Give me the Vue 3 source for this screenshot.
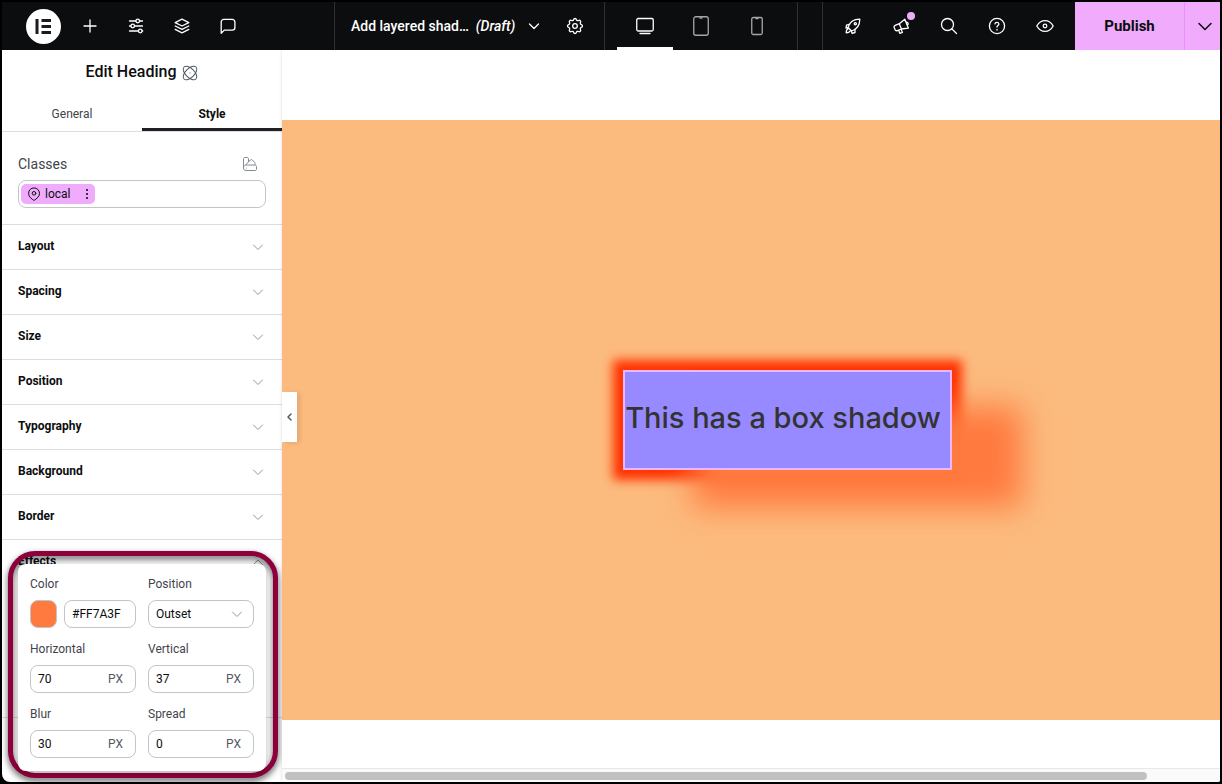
<script setup>
import { ref } from 'vue'

const sections = ['Layout', 'Spacing', 'Size', 'Position', 'Typography', 'Background', 'Border']
const color = ref('#FF7A3F')
const position = ref('Outset')
const sizes = ref([
  { id: 'horizontal', label: 'Horizontal', value: '70' },
  { id: 'vertical', label: 'Vertical', value: '37' },
  { id: 'blur', label: 'Blur', value: '30' },
  { id: 'spread', label: 'Spread', value: '0' },
])
const classInput = ref('')
</script>

<template>
  <div class="app">
    <header class="topbar">
      <div class="tools">
        <button class="logo" aria-label="Elementor menu">
          <svg width="35" height="35" viewBox="0 0 35 35"><circle cx="17.500" cy="17.500" r="17.500" fill="#fff" /><path d="M9.500 10h3v15h-3zM15.500 10h9.500v3h-9.500zM15.500 16h9.500v3h-9.500zM15.500 22h9.500v3h-9.500z" fill="#1b1c20" /></svg>
        </button>
        <button class="tool" aria-label="Add element">
          <svg class="ic" viewBox="0 0 20 20"><path d="M10 4v12M4 10h12" /></svg>
        </button>
        <button class="tool" aria-label="Site settings">
          <svg class="ic" viewBox="0 0 20 20"><path d="M3.500 5h6.300M13.600 5h2.900M3.500 10h1.300M8.600 10h7.900M3.500 15h8.900M16.200 15h.5" /><circle cx="11.700" cy="5" r="1.800" /><circle cx="6.700" cy="10" r="1.800" /><circle cx="14.300" cy="15" r="1.800" /></svg>
        </button>
        <button class="tool" aria-label="Structure">
          <svg class="ic" viewBox="0 0 20 20"><path d="M10 3.200 3.200 6.600 10 10l6.800-3.400zM3.200 10l6.800 3.400 6.800-3.400M3.200 13.400 10 16.800l6.800-3.400" /></svg>
        </button>
        <button class="tool" aria-label="Notes">
          <svg class="ic" viewBox="0 0 20 20"><path d="M3.200 17.200V6a2.600 2.600 0 0 1 2.600-2.600h8.500A2.600 2.600 0 0 1 16.900 6v5.500a2.600 2.600 0 0 1-2.600 2.600H6.300z" /></svg>
        </button>
      </div>
      <div class="document">
        <button class="doc-title"><span>Add layered shad…</span><em>(Draft)</em>
          <svg class="ic small" viewBox="0 0 16 16"><path d="m3.500 6 4.500 4.500L12.500 6" /></svg>
        </button>
        <button class="tool gear" aria-label="Page settings">
          <svg class="ic" viewBox="0 0 20 20"><path d="M8.600 3.600c.35-1.450 2.450-1.450 2.800 0a1.440 1.440 0 0 0 2.150.9c1.270-.78 2.730.68 1.950 1.950a1.440 1.440 0 0 0 .9 2.150c1.450.35 1.450 2.450 0 2.800a1.440 1.440 0 0 0-.9 2.150c.78 1.270-.68 2.730-1.950 1.950a1.440 1.440 0 0 0-2.150.9c-.35 1.450-2.450 1.450-2.800 0a1.440 1.440 0 0 0-2.150-.9c-1.270.78-2.730-.68-1.950-1.950a1.440 1.440 0 0 0-.9-2.150c-1.450-.35-1.450-2.450 0-2.800a1.440 1.440 0 0 0 .9-2.150c-.78-1.270.68-2.730 1.950-1.950a1.440 1.440 0 0 0 2.150-.9z" /><circle cx="10" cy="10" r="2.300" /></svg>
        </button>
      </div>
      <div class="devices">
        <button class="device active" aria-label="Desktop">
          <svg class="ic" viewBox="0 0 20 20"><rect x="1.750" y="2.500" width="16.500" height="12.500" rx="1.500" /><path d="M5 17.500h10" /></svg>
        </button>
        <button class="device" aria-label="Tablet">
          <svg class="ic" viewBox="0 0 20 20"><rect x="2.750" y="0.750" width="14.500" height="18.500" rx="2" /><path d="M9 2h2" /></svg>
        </button>
        <button class="device" aria-label="Mobile">
          <svg class="ic" viewBox="0 0 20 20"><rect x="4.750" y="1.500" width="10.500" height="17" rx="1.500" /><path d="M9 2.500h2" /></svg>
        </button>
      </div>
      <div class="utilities">
        <button class="util" aria-label="Checklist">
          <svg class="ic" viewBox="0 0 20 20"><path d="M6.800 13.200 5 11.500c1.200-4.500 4.500-8.300 11.800-8.300C16.800 9 14.200 13.300 8.500 15zM7 8 3.500 9.200 3 12l2-.5M12 13v3.500l-3 .8-.5-2.300M5.200 12.700c-1.800.7-2 2.300-2 4.100 1.800 0 3.400-.2 4.100-2" /><circle cx="12.300" cy="7.700" r="1.100" /></svg>
        </button>
        <button class="util" aria-label="What's new">
          <svg class="ic" viewBox="0 0 20 20"><path d="M13.800 3.200 8.300 7.700l2.100 5.300 7-.8zM8.300 7.700 4.200 9.300c-1 .4-1.400 1.200-1 2.200l.9 2.200c.4 1 1.200 1.300 2.200.9l4.100-1.600M7.600 14.200l1.300 3.200 2.500-1-1.300-3.200M15.600 6.200c1.500.1 2.200 1.800 1 2.800" /></svg>
          <span class="dot"></span>
        </button>
        <button class="util" aria-label="Finder">
          <svg class="ic" viewBox="0 0 20 20"><circle cx="8.500" cy="8.500" r="6" /><path d="m13 13 4.500 4.500" /></svg>
        </button>
        <button class="util" aria-label="Help">
          <svg class="ic" viewBox="0 0 20 20"><circle cx="10" cy="10" r="7.600" /><path d="M8 7.900c.3-2.300 4-2 3.900.2 0 1.500-1.900 1.500-1.900 3M10 13.500v.6" /></svg>
        </button>
        <button class="util" aria-label="Preview">
          <svg class="ic" viewBox="0 0 20 20"><path d="M1.800 10c4-7.200 12.400-7.200 16.400 0-4 7.200-12.400 7.200-16.400 0z" /><circle cx="10" cy="10" r="1.800" /></svg>
        </button>
      </div>
      <button class="publish">Publish</button>
      <button class="publish-more" aria-label="Save options">
        <svg width="18" height="18" viewBox="0 0 18 18"><path d="m3 6.500 6 6 6-6" /></svg>
      </button>
    </header>

    <main class="workspace">
      <aside class="panel">
        <h1 class="panel-title">Edit Heading
          <svg width="16" height="16" viewBox="0 0 16 16"><ellipse cx="8" cy="8" rx="8.500" ry="4.500" transform="rotate(45 8 8)" /><ellipse cx="8" cy="8" rx="8.500" ry="4.500" transform="rotate(-45 8 8)" /><path d="M8 8h.1" /></svg>
        </h1>
        <nav class="tabs" role="tablist">
          <button role="tab" class="tab" aria-selected="false">General</button>
          <button role="tab" class="tab active" aria-selected="true">Style</button>
        </nav>
        <section class="classes">
          <div class="classes-head">
            <label for="class-input">Classes</label>
            <button aria-label="Class manager">
              <svg width="16" height="16" viewBox="0 0 16 16"><path d="M4 14.500c-1.600 0-2.500-1-2.500-2.500V3c0-.9.6-1.500 1.500-1.500h2c.9 0 1.500.6 1.500 1.500v2.500M2 10.500 8.300 4c.7-.6 1.500-.6 2.100 0l2.300 2.500c.7.8.6 1.700-.2 2.500M4 9h8.500c1.300 0 2 .6 2 1.500V13c0 .9-.6 1.500-1.500 1.500H4M4.300 12h.1" /></svg>
            </button>
          </div>
          <div class="class-box">
            <span class="chip">
              <svg width="14" height="14" viewBox="0 0 14 14"><path d="M3 10.200a5.500 5.500 0 1 1 8 0l-2.900 2.600c-.7.6-1.500.6-2.200 0z" /><circle cx="7" cy="6.300" r="1.800" /></svg>
              <span>local</span>
              <button aria-label="Class options"><i></i><i></i><i></i></button>
            </span>
            <input id="class-input" v-model="classInput" type="text" />
          </div>
        </section>
        <button v-for="name in sections" :key="name" class="section">
          <span>{{ name }}</span>
          <svg width="16" height="16" viewBox="0 0 16 16"><path d="m3.500 6 4.500 4.500L12.500 6" /></svg>
        </button>
        <button class="section">
          <span>Effects</span>
          <svg width="16" height="16" viewBox="0 0 16 16"><path d="M3.500 10.500 8 6l4.500 4.500" /></svg>
        </button>
        <div class="effects-body"></div>

        <div class="highlight"></div>
        <form class="popover" @submit.prevent>
          <div class="field">
            <label for="shadow-color">Color</label>
            <div class="color-row">
              <button type="button" class="swatch" :style="{ backgroundColor: color }" aria-label="Pick color"></button>
              <input id="shadow-color" v-model="color" class="box" type="text" />
            </div>
          </div>
          <div class="field">
            <label for="shadow-position">Position</label>
            <div class="select-wrap">
              <select id="shadow-position" v-model="position" class="box">
                <option>Outset</option>
                <option>Inset</option>
              </select>
              <svg width="16" height="16" viewBox="0 0 16 16"><path d="m3.500 6 4.500 4.500L12.500 6" /></svg>
            </div>
          </div>
          <div v-for="size in sizes" :key="size.id" class="field">
            <label :for="size.id">{{ size.label }}</label>
            <div class="box unit-box">
              <input :id="size.id" v-model="size.value" type="text" />
              <button type="button">PX</button>
            </div>
          </div>
        </form>
      </aside>

      <section class="preview">
        <div class="stage">
          <h2 class="heading">This has a box shadow</h2>
        </div>
        <div class="scrollbar"><div class="thumb"></div></div>
        <button class="collapse" aria-label="Collapse panel">
          <svg width="8" height="10" viewBox="0 0 8 10"><path d="M5 2 2 5l3 3" /></svg>
        </button>
      </section>
    </main>
  </div>
</template>

<style>
body {
  margin: 0;
  background: #000;
}
</style>

<style scoped>
* {
  box-sizing: border-box;
}
.app {
  display: flex;
  flex-direction: column;
  height: 100vh;
  padding: 2px;
  background: #000;
  color: #0c0d0e;
  font-family: Roboto, "Liberation Sans", sans-serif;
  font-size: 12px;
}
button,
input,
select {
  margin: 0;
  padding: 0;
  border: 0;
  background: none;
  color: inherit;
  font: inherit;
}
input,
select {
  min-width: 0;
  outline: none;
}
svg {
  flex: none;
  fill: none;
  stroke: currentColor;
  stroke-linecap: round;
  stroke-linejoin: round;
}
.topbar {
  display: flex;
  flex: none;
  height: 48px;
  background: #0c0d0e;
  color: #fff;
}
.ic {
  display: block;
  width: 20px;
  height: 20px;
  stroke-width: 1.3;
}
.ic.small {
  width: 16px;
  height: 16px;
}
.tools {
  display: flex;
  flex: 1;
  align-items: center;
  padding-left: 24px;
}
.logo {
  display: flex;
  margin-right: 6px;
}
.logo svg {
  stroke: none;
}
.tool {
  display: flex;
  justify-content: center;
  width: 46px;
}
.document {
  display: flex;
  align-items: center;
  width: 270px;
  padding-left: 16px;
  border-left: 1px solid #2f3135;
}
.doc-title {
  display: flex;
  align-items: center;
  gap: 7px;
  width: 191px;
  white-space: nowrap;
  font-size: 14px;
  font-weight: 500;
}
.doc-title svg {
  margin-left: auto;
}
.gear {
  margin-left: 10px;
}
.devices {
  display: flex;
  padding: 0 124px 0 12px;
  border: solid #2f3135;
  border-width: 0 1px;
  padding-right: 12px;
}
.device {
  display: flex;
  align-items: center;
  justify-content: center;
  width: 56px;
  border: solid transparent;
  border-width: 3px 0;
  color: #a4a6aa;
}
.device.active {
  border-bottom-color: #fff;
  color: #fff;
}
.utilities {
  display: flex;
  align-items: center;
  margin-left: 24px;
  padding: 0 6px;
  border-left: 1px solid #2f3135;
}
.util {
  position: relative;
  display: flex;
  justify-content: center;
  width: 48px;
}
.dot {
  position: absolute;
  top: -4px;
  right: 10px;
  width: 8px;
  height: 8px;
  border-radius: 50%;
  background: #f0abfc;
}
.publish {
  width: 109px;
  background: #f0abfc;
  color: #0c0d0e;
  font-size: 15px;
  font-weight: 700;
}
.publish-more {
  display: flex;
  align-items: center;
  justify-content: center;
  width: 36px;
  padding-left: 5px;
  border-left: 1px solid #eb8efb;
  background: #f0abfc;
  color: #0c0d0e;
}
.publish-more svg {
  stroke-width: 1.5;
}
.workspace {
  display: flex;
  flex: 1;
  min-height: 0;
  overflow: hidden;
  border-radius: 0 0 2px 8px;
  background: #fff;
}
.panel {
  position: relative;
  display: flex;
  flex: none;
  flex-direction: column;
  width: 280px;
  overflow: hidden;
}
.panel-title {
  display: flex;
  align-items: center;
  justify-content: center;
  gap: 6px;
  height: 43px;
  margin: 0 0 3px;
  font-size: 16px;
  font-weight: 500;
}
.panel-title svg {
  margin-top: 3px;
  color: #515962;
}
.tabs {
  display: flex;
  flex: none;
  height: 36px;
  border-bottom: 1px solid #dcdde0;
}
.tab {
  flex: 1;
  border: solid transparent;
  border-width: 3px 0;
  color: #3f444b;
  font-size: 12px;
}
.tab.active {
  border-bottom-color: #1f2124;
  color: #0c0d0e;
  font-weight: 700;
}
.classes {
  padding: 22px 16px 16px;
}
.classes-head {
  display: flex;
  align-items: center;
  justify-content: space-between;
  height: 20px;
  margin-bottom: 6px;
  padding-right: 8px;
  color: #3f444b;
  font-size: 14px;
}
.classes-head button {
  display: flex;
  color: #818a96;
}
.class-box {
  display: flex;
  align-items: center;
  height: 28px;
  padding: 0 3px 0 2px;
  border: 1px solid #c2c4c8;
  border-radius: 8px;
}
.class-box input {
  flex: 1;
}
.chip {
  display: flex;
  align-items: center;
  gap: 4px;
  height: 20px;
  padding: 0 7px 0 6px;
  border-radius: 5px;
  background: #f0abfc;
}
.chip button {
  display: flex;
  flex-direction: column;
  gap: 2px;
  margin-left: 11px;
}
.chip i {
  width: 2px;
  height: 2px;
  background: #3f2f44;
}
.section {
  display: flex;
  flex: none;
  align-items: center;
  justify-content: space-between;
  height: 45px;
  padding: 0 16px;
  border-top: 1px solid #dcdde0;
  font-size: 12px;
  font-weight: 700;
}
.section span {
  padding-bottom: 2px;
}
.section svg,
.select-wrap svg {
  color: #8f979f;
}
.effects-body {
  flex: none;
  height: 134px;
  border-bottom: 1px solid #dcdde0;
}
.highlight {
  position: absolute;
  right: 4px;
  bottom: 4px;
  left: 6px;
  height: 227px;
  border: 5px solid #8d003b;
  border-radius: 27px;
  filter: drop-shadow(0 3px 3px rgba(0, 0, 0, 0.7));
}
.popover {
  position: absolute;
  right: 16px;
  bottom: 11px;
  left: 16px;
  display: grid;
  grid-template-columns: 1fr 1fr;
  gap: 13px 12px;
  padding: 12px 12px 13px;
  border-radius: 8px;
  background: #fff;
  box-shadow: 0 2px 5px rgba(0, 0, 0, 0.25);
}
.field {
  display: flex;
  flex-direction: column;
  gap: 8px;
  min-width: 0;
}
.field label {
  line-height: 16px;
  color: #3f444b;
}
.box {
  width: 100%;
  height: 28px;
  padding: 0 7px;
  border: 1px solid #c2c4c8;
  border-radius: 8px;
}
.color-row {
  display: flex;
  gap: 7px;
}
.swatch {
  flex: none;
  width: 27px;
  height: 28px;
  border: 1px solid #c2c4c8;
  border-radius: 8px;
}
.select-wrap {
  position: relative;
}
select.box {
  display: block;
  appearance: none;
}
.select-wrap svg {
  position: absolute;
  top: 6px;
  right: 9px;
  pointer-events: none;
}
.unit-box {
  display: flex;
  align-items: center;
  padding-right: 12px;
}
.unit-box input {
  flex: 1;
}
.unit-box button {
  color: #515962;
}
.preview {
  position: relative;
  display: flex;
  flex: 1;
  flex-direction: column;
  min-width: 0;
  padding-top: 70px;
  box-shadow: 0 0 3px rgba(0, 0, 0, 0.15);
}
.stage {
  display: flex;
  flex: 1;
  align-items: center;
  justify-content: center;
  margin-bottom: 48px;
  padding-left: 73px;
  background: #fcbb7e;
}
.heading {
  display: flex;
  align-items: center;
  height: 100px;
  margin: 0;
  padding: 0 9px 6px 0;
  border: 2px solid #f0b6fc;
  background: #9789ff;
  box-shadow: 70px 37px 30px 0 #ff7a3f, 0 0 10px 10px #ff3300;
  color: #333;
  font-family: Inter, sans-serif;
  font-size: 29px;
  font-weight: 500;
  white-space: nowrap;
}
.scrollbar {
  flex: none;
  height: 14px;
  padding: 3px 2px 2px 3px;
  border-top: 1px solid #e8e8e8;
  background: #fafafa;
}
.thumb {
  width: 92.4%;
  height: 8px;
  border-radius: 4px;
  background: #c1c1c1;
}
.collapse {
  position: absolute;
  top: 342px;
  left: 0;
  display: flex;
  align-items: center;
  justify-content: center;
  width: 15px;
  height: 50px;
  background: #fff;
  box-shadow: 3px 1px 5px rgba(0, 0, 0, 0.1);
  color: #515962;
}
.collapse svg {
  stroke-width: 1.5;
}
</style>
